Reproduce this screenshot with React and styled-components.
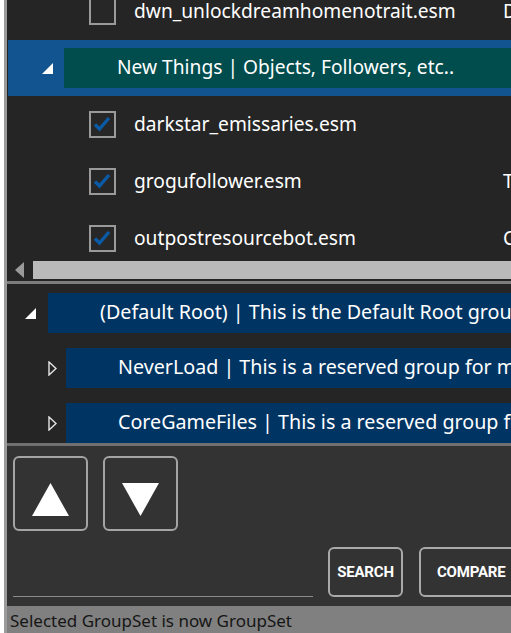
import styled, { createGlobalStyle } from 'styled-components';

const GlobalStyle = createGlobalStyle`
  html, body {
    margin: 0;
    padding: 0;
    background: #ffffff;
  }
  body {
    width: 511px;
    height: 633px;
    overflow: hidden;
  }
`;

const UI_FONT = `"Noto Sans", "Open Sans", sans-serif`;

const Screen = styled.div`
  display: flex;
  width: 511px;
  height: 633px;
  overflow: hidden;
`;

const Backdrop = styled.div`
  width: 4px;
  flex-shrink: 0;
  background: #ffffff;
`;

const Window = styled.div`
  flex: 1;
  min-width: 0;
  display: flex;
  flex-direction: column;
  border-left: 3px solid #9b9b9b;
  background: #252525;
  font-family: ${UI_FONT};
  color: #ffffff;
`;

/* ---------- top list of plugin files ---------- */

const TopPanel = styled.div`
  height: 279px;
  display: flex;
  flex-direction: column;
  flex-shrink: 0;
`;

const FileList = styled.div`
  height: 261px;
  overflow: hidden;
`;

const FileListInner = styled.div`
  margin-top: -17px;
`;

const FileRow = styled.div`
  height: 57px;
  display: flex;
  align-items: center;
  padding-left: 82px;
  white-space: nowrap;
  overflow: hidden;
`;

const CheckBox = styled.div`
  width: 27px;
  height: 27px;
  box-sizing: border-box;
  border: 2px solid #9a9a9a;
  background: #272727;
  flex-shrink: 0;
  display: flex;
  align-items: center;
  justify-content: center;
`;

const FileName = styled.span`
  margin-left: 18px;
  width: 369px;
  flex-shrink: 0;
  font-size: 19.2px;
  line-height: 24px;
  margin-top: -2px;
`;

const Extra = styled.span`
  font-size: 19.2px;
  line-height: 24px;
  margin-top: -2px;
`;

const GroupRow = styled.div`
  height: 56px;
  display: flex;
  align-items: center;
  padding-left: 34px;
  margin-left: 1px;
  background: #11548f;
`;

const GroupBox = styled.div`
  flex: 1;
  height: 40px;
  box-sizing: border-box;
  margin-left: 11px;
  padding: 0 0 3px 53px;
  display: flex;
  align-items: center;
  background: #014d4d;
  font-size: 19.2px;
  white-space: nowrap;
  overflow: hidden;
`;

const HScroll = styled.div`
  height: 18px;
  display: flex;
  align-items: center;
  padding-left: 8px;
`;

const Thumb = styled.div`
  flex: 1;
  height: 18px;
  margin-left: 9px;
  background: #bababa;
`;

const Divider = styled.div`
  height: 3px;
  margin-top: 2px;
  background: #7d7d7d;
  flex-shrink: 0;
`;

/* ---------- group tree ---------- */

const TreePanel = styled.div`
  height: 159px;
  padding-top: 9px;
  box-sizing: border-box;
  overflow: hidden;
  flex-shrink: 0;
  display: flex;
  flex-direction: column;
  gap: 15px;
`;

const TreeRow = styled.div`
  height: 40px;
  flex-shrink: 0;
  display: flex;
  align-items: center;
  padding-left: ${(p) => p.$indent}px;
`;

const Toggle = styled.div`
  width: ${(p) => p.$width}px;
  flex-shrink: 0;
  display: flex;
  align-items: center;
`;

const TreeBar = styled.div`
  flex: 1;
  height: 40px;
  box-sizing: border-box;
  padding: 0 0 3px 52px;
  display: flex;
  align-items: center;
  background: #003463;
  font-size: 19.7px;
  white-space: nowrap;
  overflow: hidden;
`;

const BottomRule = styled.div`
  height: 3px;
  background: #707070;
  flex-shrink: 0;
`;

/* ---------- buttons panel ---------- */

const ControlPanel = styled.div`
  flex: 1;
  background: #333333;
  padding: 10px 0 0 6px;
  display: flex;
  flex-direction: column;
`;

const ArrowRow = styled.div`
  display: flex;
  gap: 15px;
`;

const ArrowButton = styled.button`
  width: 75px;
  height: 75px;
  box-sizing: border-box;
  border: 2px solid #a4a4a4;
  border-radius: 6px;
  background: transparent;
  padding: 11px 0 0 0;
  display: flex;
  align-items: center;
  justify-content: center;
`;

const ActionRow = styled.div`
  margin-top: 16px;
  display: flex;
  align-items: flex-end;
  white-space: nowrap;
`;

const SearchField = styled.div`
  width: 300px;
  height: 50px;
  box-sizing: border-box;
  border-bottom: 1.5px solid #8a8a8a;
  flex-shrink: 0;
`;

const ActionButton = styled.button`
  height: 50px;
  flex-shrink: 0;
  box-sizing: border-box;
  margin-left: ${(p) => p.$gap}px;
  padding: 0 ${(p) => p.$pad}px;
  min-width: ${(p) => p.$min}px;
  border: 2px solid #a9a9a9;
  border-radius: 6px;
  background: transparent;
  color: #ffffff;
  font-family: Roboto, "Liberation Sans", sans-serif;
  font-weight: 700;
  font-size: 15px;
  letter-spacing: -0.2px;
`;

const StatusBar = styled.div`
  height: 27px;
  flex-shrink: 0;
  background: #808080;
  color: #161616;
  padding-left: 3px;
  font-size: 17px;
  line-height: 30px;
  white-space: nowrap;
  overflow: hidden;
`;

/* ---------- glyphs ---------- */

const Check = () => (
  <svg width="23" height="23" viewBox="0 0 23 23">
    <path d="M4 11.5 L8.5 16 L18 5" fill="none" stroke="#0b5aa6" strokeWidth="3.4" />
  </svg>
);

const Expanded = () => (
  <svg width="11" height="11" viewBox="0 0 11 11">
    <polygon points="11,0 11,11 0,11" fill="#ffffff" />
  </svg>
);

const Collapsed = () => (
  <svg width="9" height="15" viewBox="0 0 9 15">
    <polygon points="1,1 8,7.5 1,14" fill="none" stroke="#e6e6e6" strokeWidth="1.4" />
  </svg>
);

const LeftArrow = () => (
  <svg width="9" height="16" viewBox="0 0 9 16">
    <polygon points="9,0 9,16 0,8" fill="#9a9a9a" />
  </svg>
);

const Triangle = ({ down }) => (
  <svg width="37" height="33" viewBox="0 0 37 33">
    <polygon points={down ? '0,0 37,0 18.5,33' : '18.5,0 37,33 0,33'} fill="#ffffff" />
  </svg>
);

const files = [
  { name: 'dwn_unlockdreamhomenotrait.esm', extra: 'D', checked: false },
  { group: 'New Things | Objects, Followers, etc..' },
  { name: 'darkstar_emissaries.esm', extra: '', checked: true },
  { name: 'grogufollower.esm', extra: 'T', checked: true },
  { name: 'outpostresourcebot.esm', extra: 'C', checked: true },
];

const groups = [
  { text: '(Default Root) | This is the Default Root group for all plugins', indent: 18, toggle: 23, open: true },
  { text: 'NeverLoad | This is a reserved group for mods which should never load', indent: 41, toggle: 18 },
  { text: 'CoreGameFiles | This is a reserved group for core game files', indent: 41, toggle: 18 },
];

export default function App() {
  return (
    <>
      <GlobalStyle />
      <Screen>
        <Backdrop />
        <Window>
          <TopPanel>
            <FileList>
              <FileListInner>
                {files.map((f, i) =>
                  f.group ? (
                    <GroupRow key={i}>
                      <Expanded />
                      <GroupBox>{f.group}</GroupBox>
                    </GroupRow>
                  ) : (
                    <FileRow key={i}>
                      <CheckBox>{f.checked && <Check />}</CheckBox>
                      <FileName>{f.name}</FileName>
                      <Extra>{f.extra}</Extra>
                    </FileRow>
                  )
                )}
              </FileListInner>
            </FileList>
            <HScroll>
              <LeftArrow />
              <Thumb />
            </HScroll>
          </TopPanel>
          <Divider />
          <TreePanel>
            {groups.map((g) => (
              <TreeRow key={g.text} $indent={g.indent}>
                <Toggle $width={g.toggle}>{g.open ? <Expanded /> : <Collapsed />}</Toggle>
                <TreeBar>{g.text}</TreeBar>
              </TreeRow>
            ))}
          </TreePanel>
          <BottomRule />
          <ControlPanel>
            <ArrowRow>
              <ArrowButton>
                <Triangle />
              </ArrowButton>
              <ArrowButton>
                <Triangle down />
              </ArrowButton>
            </ArrowRow>
            <ActionRow>
              <SearchField />
              <ActionButton $gap={15} $pad={0} $min={75}>SEARCH</ActionButton>
              <ActionButton $gap={16} $pad={16} $min={100}>COMPARE</ActionButton>
            </ActionRow>
          </ControlPanel>
          <StatusBar>Selected GroupSet is now GroupSet</StatusBar>
        </Window>
      </Screen>
    </>
  );
}
